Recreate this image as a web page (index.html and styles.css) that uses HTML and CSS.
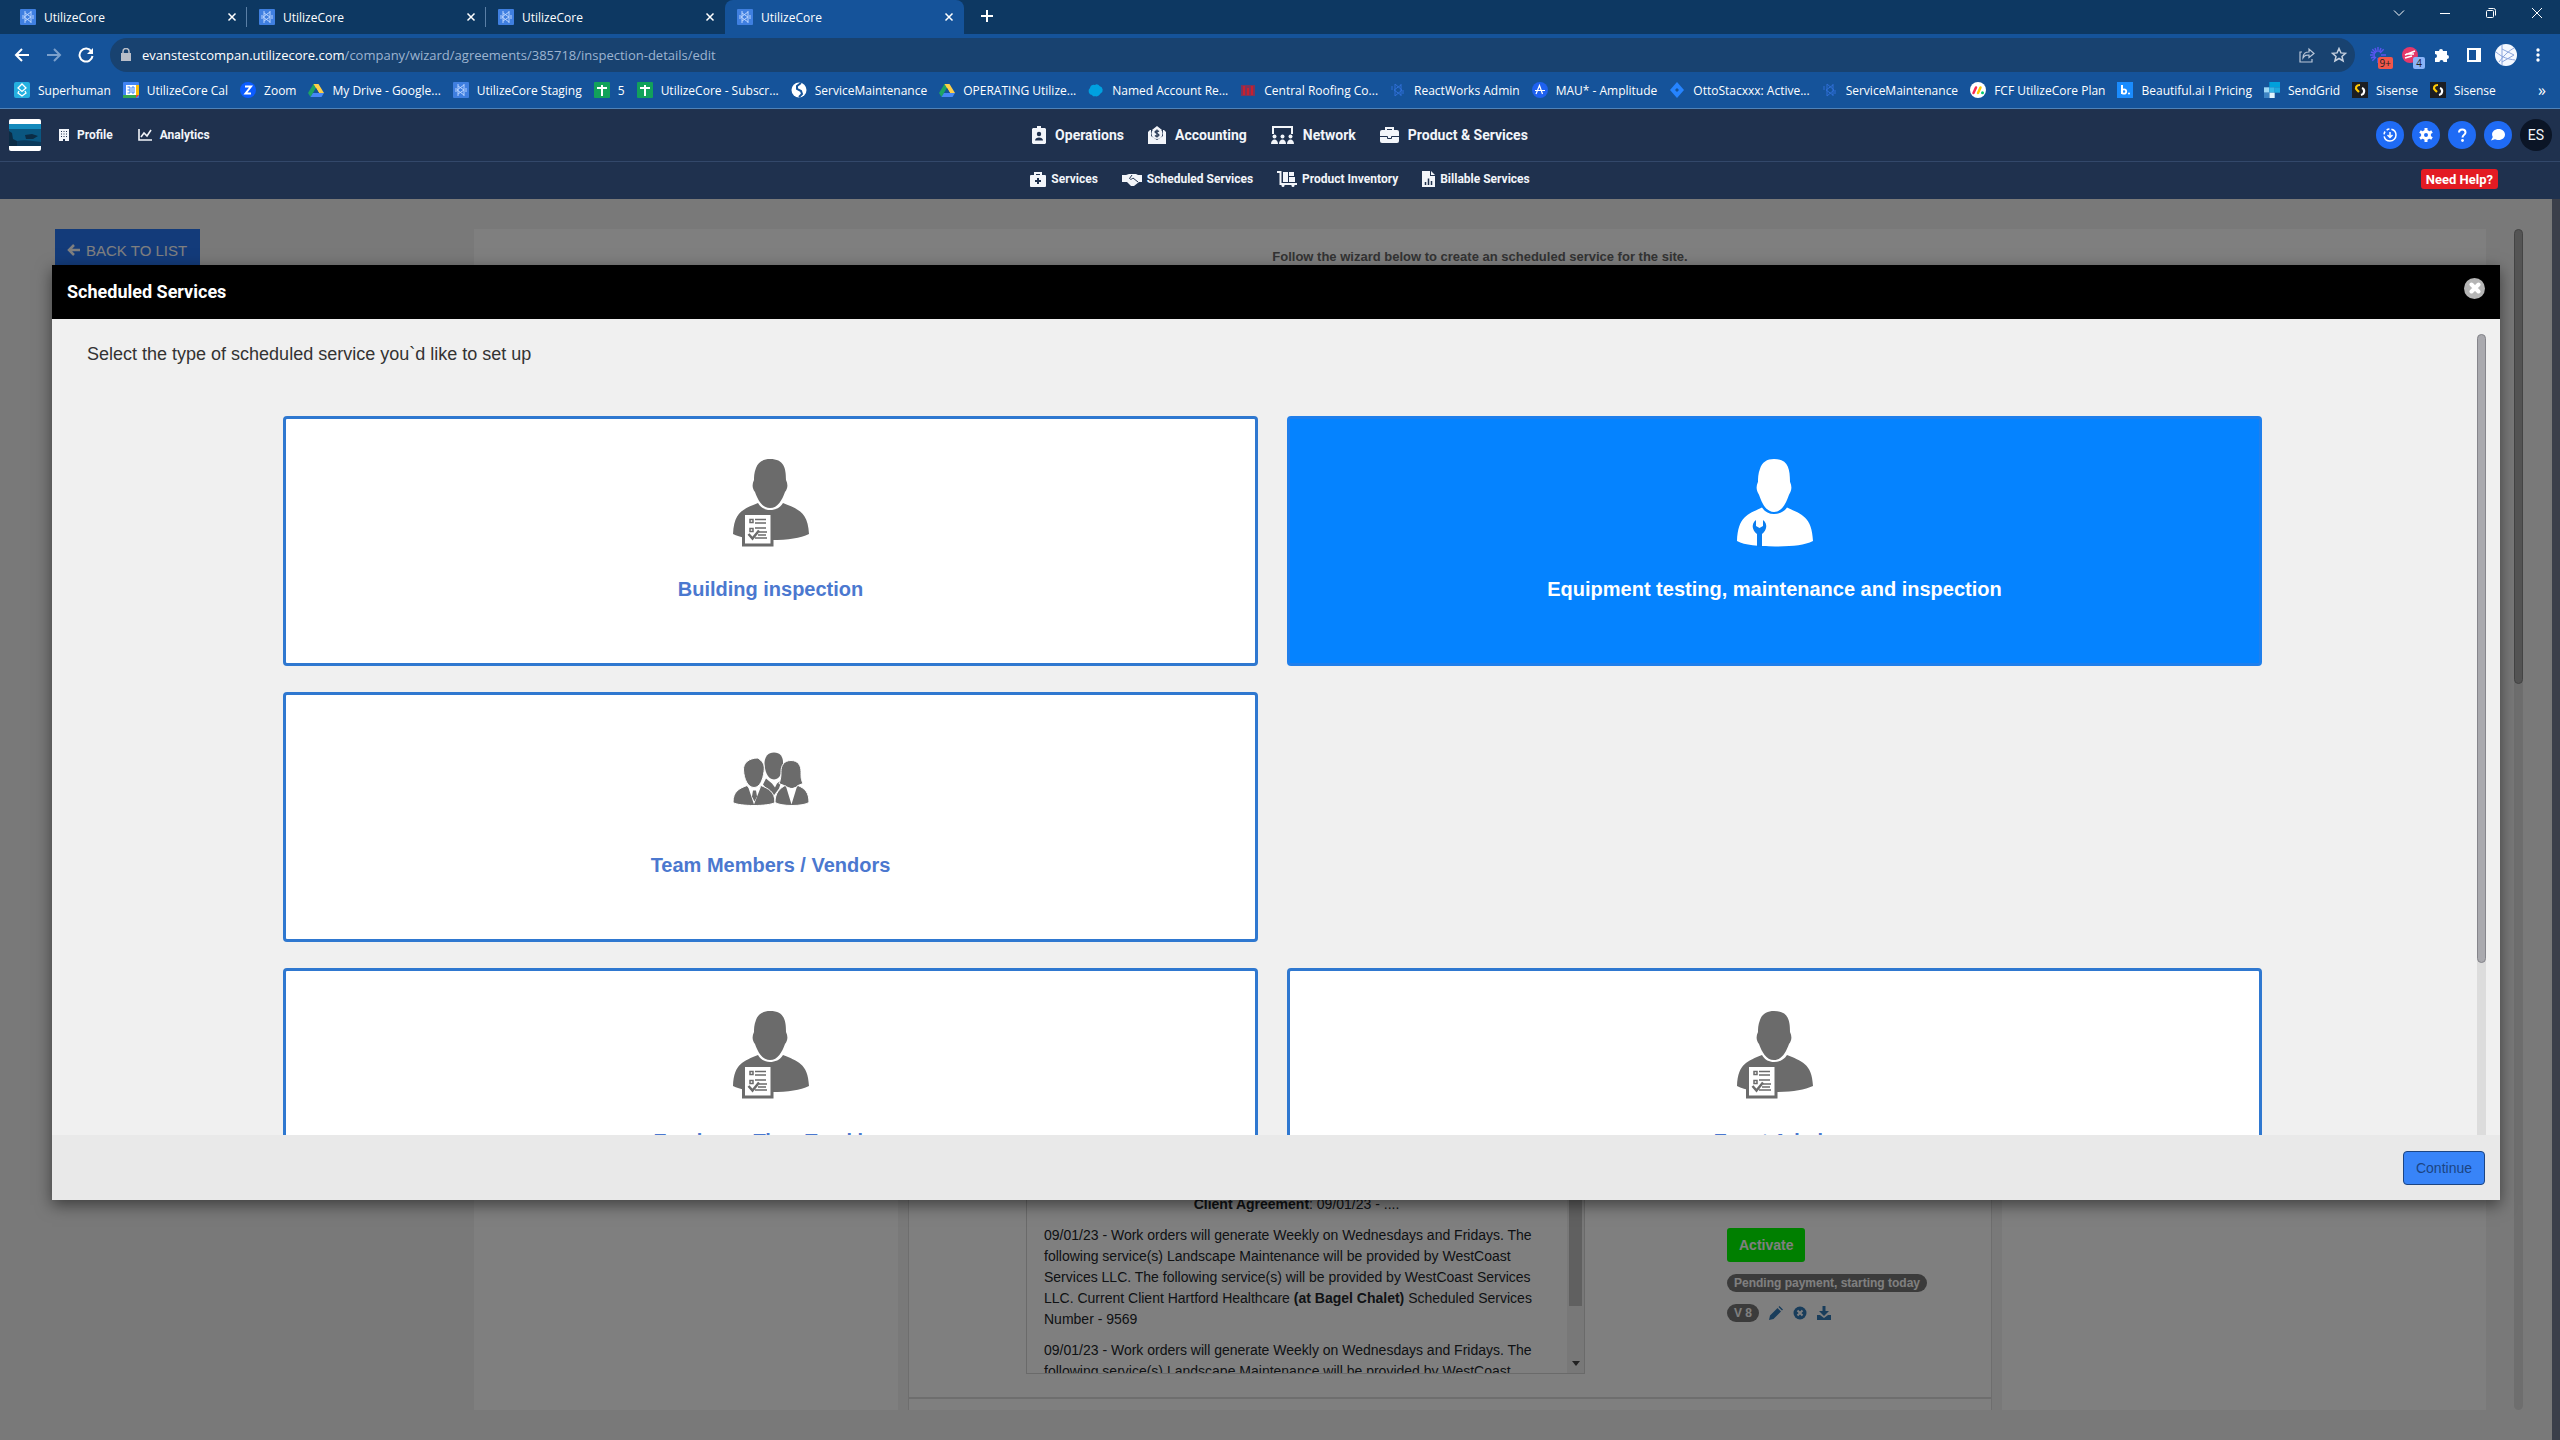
FILE: index.html
```html
<!DOCTYPE html>
<html lang="en">
<head>
    <meta charset="UTF-8">
    <meta name="viewport" content="width=device-width, initial-scale=1.0">
    <title>UtilizeCore</title>
    <link rel="stylesheet" href="styles.css">
</head>
<body>
    <!-- icons -->
    <svg class="sprite" aria-hidden="true">
        <symbol id="i-core" viewBox="0 0 16 16">
            <rect width="16" height="16" rx="1" fill="#3f7fe0"/>
            <path d="M5 2v12M5 4l6 4-6 4M11 2v12M11 3L4 8l7 5M3 6v4M13 6v4" fill="none" stroke="#b8d4ff"/>
        </symbol>
        <symbol id="i-core-dark" viewBox="0 0 16 16">
            <path d="M5 2v12M5 2l7 6-7 6M11 2v12M11 3L4 8l7 5M2 4v4M13 8v4" fill="none" stroke="#2f6fd6"/>
        </symbol>
        <symbol id="i-superhuman" viewBox="0 0 16 16">
            <rect width="16" height="16" rx="2" fill="#25b0e0"/>
            <path d="M8 2l4 4-4 3.500-4-3.500zM5 9l-1 2 4 3 4-3-1-2" fill="none" stroke="#fff" stroke-width="1.300"/>
        </symbol>
        <symbol id="i-cal" viewBox="0 0 16 16">
            <rect width="16" height="16" rx="1" fill="#4285f4"/>
            <path d="M13 3h3v10h-3z" fill="#fbbc04"/><path d="M0 13h13v3H0z" fill="#34a853"/><path d="M13 13h3l-3 3z" fill="#ea4335"/>
            <path d="M3 3h10v10H3z" fill="#fff"/>
            <path d="M4.500 5h2.500v6H4.500M4.500 8h2.500M9 5h2v6H9z" fill="none" stroke="#4285f4"/>
        </symbol>
        <symbol id="i-zoom" viewBox="0 0 16 16">
            <circle cx="8" cy="8" r="8" fill="#0b5cff"/>
            <path d="M5 4.500h6L5.500 11.500H11" fill="none" stroke="#fff" stroke-width="2"/>
        </symbol>
        <symbol id="i-drive" viewBox="0 0 16 16">
            <path d="M5.500 2h5L5 11.500 2.500 15 0 11z" fill="#1ea362"/>
            <path d="M5.500 2h5l5.500 9h-5z" fill="#ffcf48"/>
            <path d="M5 11h11l-2.500 4h-11z" fill="#4688f4"/>
            <path d="M8 6l3 5H5z" fill="#15539a"/>
        </symbol>
        <symbol id="i-sheet" viewBox="0 0 16 16">
            <rect width="16" height="16" rx="1" fill="#12a15a"/>
            <path d="M8 3v11M3 6h10" stroke="#fff" stroke-width="2"/>
        </symbol>
        <symbol id="i-globe" viewBox="0 0 16 16">
            <circle cx="8" cy="8" r="7.500" fill="#fff"/>
            <path d="M10 1L6 4v3l4 2 1 3-3 3" fill="none" stroke="#15539a" stroke-width="2"/>
        </symbol>
        <symbol id="i-cloud" viewBox="0 0 16 16">
            <path d="M4 13a4 4 0 0 1-2-7 3.500 3.500 0 0 1 5-3 3 3 0 0 1 4.500 1 4 4 0 0 1 1 7.500C11 14 8 15 7 14c-1 1-2.500 0-3-1z" fill="#00a1e0"/>
        </symbol>
        <symbol id="i-roof" viewBox="0 0 16 16">
            <path d="M1 3h14v11H1z" fill="#7d3358"/><path d="M4 4v9M8 6v7M12 4v9" stroke="#c8202f" stroke-width="2"/>
        </symbol>
        <symbol id="i-amp" viewBox="0 0 16 16">
            <circle cx="8" cy="8" r="8" fill="#1e61f0"/>
            <path d="M4 12L7.500 3.500 10.500 12M3 8.500h10" fill="none" stroke="#fff" stroke-width="1.200"/>
        </symbol>
        <symbol id="i-jira" viewBox="0 0 16 16">
            <path d="M8 0l7 8-7 8-7-8z" fill="#2684ff"/><path d="M8 6l2 2-2 2-2-2z" fill="#15539a"/>
        </symbol>
        <symbol id="i-monday" viewBox="0 0 16 16">
            <circle cx="8" cy="8" r="8" fill="#fff"/>
            <path d="M3.500 11l2.500-5.500" stroke="#f62b54" stroke-width="2.500" stroke-linecap="round"/>
            <path d="M8 11l2.500-5.500" stroke="#fc0" stroke-width="2.500" stroke-linecap="round"/>
            <circle cx="12.500" cy="10.800" r="1.500" fill="#00ca72"/>
        </symbol>
        <symbol id="i-beaut" viewBox="0 0 16 16">
            <rect width="16" height="16" fill="#1a8cff"/>
            <path d="M5 3v9" stroke="#fff" stroke-width="2"/><circle cx="7" cy="9.500" r="2.200" fill="none" stroke="#fff" stroke-width="1.800"/>
            <circle cx="12" cy="11.500" r="1" fill="#fff"/>
        </symbol>
        <symbol id="i-sendgrid" viewBox="0 0 16 16">
            <path d="M0 5.300h5.300v5.400H0z" fill="#9dd6f5"/><path d="M5.300 0h10.700v5.300H5.300z" fill="#00a0dc"/>
            <path d="M5.300 5.300h5.400v5.400H5.300z" fill="#37b6e8"/><path d="M5.300 10.700h5.400V16H5.300z" fill="#e2f4fd"/>
            <path d="M10.700 5.300H16v5.400h-5.300z" fill="#1da8e0"/><path d="M0 10.700h5.300V16H0z" fill="#3d84c4"/>
        </symbol>
        <symbol id="i-sisense" viewBox="0 0 16 16">
            <rect width="16" height="16" fill="#1c1e22"/>
            <path d="M8 3C4 3 3 6 5 8l2 2" fill="none" stroke="#ffcb05" stroke-width="2.200"/>
            <path d="M10 6c3 1 3 6-1 7" fill="none" stroke="#fff" stroke-width="2.200"/>
        </symbol>
        <symbol id="i-x" viewBox="0 0 10 10"><path d="M1.500 1.500l7 7M8.500 1.500l-7 7" fill="none" stroke="currentColor" stroke-width="1.500"/></symbol>

        <!-- card pictures -->
        <symbol id="i-person" viewBox="0 0 76 88">
            <path d="M37 0C30 0 25 3 23 9c-2 5-2 9-2 12-2 4-2 8 1 12 3 8 7 16 15 16s12-8 15-16c3-4 3-8 1-12C53 9 51 0 37 0z" fill="currentColor"/>
            <path d="M25 44c3 5 7 7 12 7s10-2 13-7c14 6 25 8 26 31-9 4-20 6-38 6-17 0-30-2-38-6 1-23 11-25 25-31z" fill="currentColor"/>
        </symbol>
        <symbol id="i-inspector" viewBox="0 0 76 88">
            <use href="#i-person"/>
            <path d="M10.500 54.500h28.500v31.500H10.500z" fill="#fff" stroke="currentColor" stroke-width="3"/>
            <path d="M17 60.500h3v3h-3zM17 69.500h3v3h-3z" fill="none" stroke="currentColor" stroke-width="1.500"/>
            <path d="M22 60.500h11M22 64h11M22 69h11M26 73h8M25 76h8M22 79h12" stroke="currentColor" stroke-width="1.500"/>
            <path d="M15.500 75l4 4.500 6.500-8" fill="none" stroke="currentColor" stroke-width="2.500"/>
        </symbol>
        <symbol id="i-mechanic" viewBox="0 0 76 88">
            <g transform="scale(1 1.080)">
                <path d="M37 0C30 0 25 3 23 9c-2 5-2 9-2 12-2 4-2 8 1 12 3 8 7 16 15 16s12-8 15-16c3-4 3-8 1-12C53 9 51 0 37 0z" fill="currentColor"/>
                <path d="M25 45c3 4 7 6 12 6s10-2 13-6c14 6 25 8 26 31-9 4-20 5-38 5-17 0-30-1-38-5 1-23 11-25 25-31z" fill="currentColor"/>
            </g>
            <path d="M19 61c-5 4-4 10 1 14v13h5V75c5-4 6-10 1-14v6l-3.500 2-3.500-2z" fill="#0a7df0"/>
        </symbol>
        <symbol id="i-team" viewBox="0 0 76 53">
            <g fill="currentColor">
                <path d="M41 0c-6 0-9 4-9.500 10 0 8 3 17 9.500 17s9-9 9-17c0-6-3-10-9-10z"/>
                <path d="M33 26l6 5 3 4 2-4 5-4-3 9-6 8-10-12z"/>
            </g>
            <g fill="currentColor" stroke="#fff">
                <path d="M25 5.500c-9 0-15 5-14.500 12C11 27 15 35 21 35s9-8 10-16c1-6-1-9-3-11z"/>
                <path d="M58 8c-7 0-10 5-10 11 0 7-1 10-2 12l5 2c2 3 5 4 8 4s5-2 6-4l5-2c-2-4-2-6-2-12 0-6-3-11-10-11z"/>
                <path d="M14 33c2 3 5 5 7 5s5-2 7-5c7 3 14 6 14 17-6 4-36 4-42 0 0-11 6-14 14-17z"/>
                <path d="M52 33c2 2 5 3 7 3s4-1 6-3c7 3 11 7 11 17-6 4-28 4-34 0 0-10 5-14 10-17z"/>
            </g>
            <path d="M15 34l6 18 7-18-7 4zM53 34l5.500 18L64 34l-5.500 2z" fill="#fff"/>
            <path d="M20 38h3l1 6-2.500 5L19 44z" fill="currentColor"/>
        </symbol>
    </svg>

    <!-- browser -->
    <header class="browser">
        <div class="tabs">
            <div class="tab"><svg class="fav"><use href="#i-core"/></svg><span>UtilizeCore</span><button type="button" aria-label="Close tab"><svg><use href="#i-x"/></svg></button></div>
            <div class="tab"><svg class="fav"><use href="#i-core"/></svg><span>UtilizeCore</span><button type="button" aria-label="Close tab"><svg><use href="#i-x"/></svg></button></div>
            <div class="tab"><svg class="fav"><use href="#i-core"/></svg><span>UtilizeCore</span><button type="button" aria-label="Close tab"><svg><use href="#i-x"/></svg></button></div>
            <div class="tab active"><svg class="fav"><use href="#i-core"/></svg><span>UtilizeCore</span><button type="button" aria-label="Close tab"><svg><use href="#i-x"/></svg></button></div>
            <button class="new-tab" type="button" aria-label="New tab"><svg viewBox="0 0 12 12"><path d="M6 0v12M0 6h12" stroke="#fff" stroke-width="2"/></svg></button>
            <div class="window-btns">
                <button type="button" aria-label="Search tabs"><svg viewBox="0 0 12 12"><path d="M1 3.500l5 5 5-5" fill="none" stroke="#fff"/></svg></button>
                <button type="button" aria-label="Minimize"><svg viewBox="0 0 12 12"><path d="M1 6.500h10" stroke="#fff"/></svg></button>
                <button type="button" aria-label="Restore"><svg viewBox="0 0 12 12"><rect x="1.500" y="3.500" width="7" height="7" rx="1" fill="none" stroke="#fff"/><path d="M3.500 1.500h5a2 2 0 0 1 2 2v5" fill="none" stroke="#fff"/></svg></button>
                <button type="button" aria-label="Close"><svg viewBox="0 0 12 12"><path d="M1 1l10 10M11 1L1 11" stroke="#fff"/></svg></button>
            </div>
        </div>
        <div class="toolbar">
            <button type="button" aria-label="Back"><svg viewBox="0 0 16 16"><path d="M15 8H2M8 2L2 8l6 6" fill="none" stroke="#fff" stroke-width="2"/></svg></button>
            <button type="button" aria-label="Forward"><svg viewBox="0 0 16 16"><path d="M1 8h13M8 2l6 6-6 6" fill="none" stroke="#7ba0cc" stroke-width="2"/></svg></button>
            <button type="button" aria-label="Reload"><svg viewBox="0 0 16 16"><path d="M13.500 4.500A6.500 6.500 0 1 0 14.500 9" fill="none" stroke="#fff" stroke-width="2"/><path d="M15 1v6H9z" fill="#fff"/></svg></button>
            <div class="omnibox">
                <svg class="lock" viewBox="0 0 10 14"><path d="M0 5h10v8H0z" fill="#b9bec8"/><path d="M2 5.500V3.500a3 3 0 0 1 6 0v2" fill="none" stroke="#b9bec8" stroke-width="1.500"/></svg>
                <div class="url">evanstestcompan.utilizecore.com<span>/company/wizard/agreements/385718/inspection-details/edit</span></div>
                <button type="button" aria-label="Share"><svg viewBox="0 0 16 16"><path d="M3 5H1v10h12v-3M4 11c0-5 3-6 6-6V2l5 4.500-5 4V8c-3 0-4 0-6 3z" fill="none" stroke="#b9c6d8" stroke-width="1.200"/></svg></button>
                <button type="button" aria-label="Bookmark"><svg viewBox="0 0 16 16"><path d="M8 1.500l1.900 4.400 4.600.400-3.500 3.100 1.100 4.600L8 11.500 3.900 14 5 9.400 1.500 6.300l4.600-.400z" fill="none" stroke="#c5d0df" stroke-width="1.500"/></svg></button>
            </div>
            <button type="button" class="ext" aria-label="Loom"><svg viewBox="0 0 16 16"><path d="M8 0v5M8 11v5M0 8h5M11 8h5M2.300 2.300L6 6M10 10l3.700 3.700M13.700 2.300L10 6M6 10l-3.700 3.700M5 1l1.500 4M11 1L9.500 5M1 5l4 1.500M1 11l4-1.500" stroke="#5a55f0" stroke-width="1.400"/></svg><span class="badge">9+</span></button>
            <button type="button" class="ext" aria-label="Extension"><svg viewBox="0 0 16 16"><circle cx="8" cy="8" r="8" fill="#e5386a"/><path d="M3 8l10-4M4 7h8M3 11l7-2" stroke="#fff" stroke-width="1.500"/></svg><span class="badge blue">4</span></button>
            <button type="button" aria-label="Extensions"><svg viewBox="0 0 16 16"><path d="M1 4h4a2 2 0 1 1 4 0h4v4a2 2 0 1 1 0 4v3H9.500a2 2 0 0 0-4 0H1v-4a2 2 0 0 0 0-4z" fill="#fff"/></svg></button>
            <button type="button" aria-label="Side panel"><svg viewBox="0 0 16 16"><path d="M2 2h12v12H2z" fill="none" stroke="#fff" stroke-width="2"/><path d="M10 2h4v12h-4z" fill="#fff"/></svg></button>
            <button type="button" class="avatar" aria-label="Profile"><svg viewBox="0 0 22 22"><circle cx="11" cy="11" r="11" fill="#f4f8ff"/><path d="M7 1v20M7 5l12 6-12 7M1 8c7 6 12 7 19 8M4 18C10 10 14 7 19 4" fill="none" stroke="#8aa4dc"/></svg></button>
            <button type="button" aria-label="Menu"><svg viewBox="0 0 16 16"><circle cx="8" cy="3" r="1.700" fill="#fff"/><circle cx="8" cy="8" r="1.700" fill="#fff"/><circle cx="8" cy="13" r="1.700" fill="#fff"/></svg></button>
        </div>
        <nav class="bookmarks">
            <a href="#"><svg class="fav"><use href="#i-superhuman"/></svg>Superhuman</a>
            <a href="#"><svg class="fav"><use href="#i-cal"/></svg>UtilizeCore Cal</a>
            <a href="#"><svg class="fav"><use href="#i-zoom"/></svg>Zoom</a>
            <a href="#"><svg class="fav"><use href="#i-drive"/></svg>My Drive - Google...</a>
            <a href="#"><svg class="fav"><use href="#i-core"/></svg>UtilizeCore Staging</a>
            <a href="#"><svg class="fav"><use href="#i-sheet"/></svg>5</a>
            <a href="#"><svg class="fav"><use href="#i-sheet"/></svg>UtilizeCore - Subscr...</a>
            <a href="#"><svg class="fav"><use href="#i-globe"/></svg>ServiceMaintenance</a>
            <a href="#"><svg class="fav"><use href="#i-drive"/></svg>OPERATING Utilize...</a>
            <a href="#"><svg class="fav"><use href="#i-cloud"/></svg>Named Account Re...</a>
            <a href="#"><svg class="fav"><use href="#i-roof"/></svg>Central Roofing Co...</a>
            <a href="#"><svg class="fav"><use href="#i-core-dark"/></svg>ReactWorks Admin</a>
            <a href="#"><svg class="fav"><use href="#i-amp"/></svg>MAU* - Amplitude</a>
            <a href="#"><svg class="fav"><use href="#i-jira"/></svg>OttoStacxxx: Active...</a>
            <a href="#"><svg class="fav"><use href="#i-core-dark"/></svg>ServiceMaintenance</a>
            <a href="#"><svg class="fav"><use href="#i-monday"/></svg>FCF UtilizeCore Plan</a>
            <a href="#"><svg class="fav"><use href="#i-beaut"/></svg>Beautiful.ai I Pricing</a>
            <a href="#"><svg class="fav"><use href="#i-sendgrid"/></svg>SendGrid</a>
            <a href="#"><svg class="fav"><use href="#i-sisense"/></svg>Sisense</a>
            <a href="#"><svg class="fav"><use href="#i-sisense"/></svg>Sisense</a>
            <button type="button">»</button>
        </nav>
    </header>

    <!-- app menu -->
    <div class="menu">
        <div class="menu-top">
            <div class="menu-left">
                <svg class="logo" viewBox="0 0 32 32"><rect width="32" height="32" rx="2" fill="#fff"/><path d="M0 5h32v22H0z" fill="#0a5680"/><path d="M0 5h32v5H0z" fill="#1489bb"/><path d="M0 12l3 2 1 6 4 2 2 5H0zM16 16l7-1 6 2-5 3h-7z" fill="#0b2c45"/><path d="M8 22c8-2 16 0 24 1v4H8z" fill="#0a3a5c"/></svg>
                <a href="#"><svg viewBox="0 0 10 12" width="10" height="12"><path d="M0 0h10v12H6v-2H4v2H0z" fill="#f2f5fa"/><path d="M2 2.500h6M2 5h6M2 7.500h6" stroke="#1f314e" stroke-dasharray="1 1.500"/></svg>Profile</a>
                <a href="#"><svg viewBox="0 0 14 12" width="14" height="12"><path d="M1 0v11h13M3 8l3-4 3 3 4-6" fill="none" stroke="#f2f5fa" stroke-width="1.600"/></svg>Analytics</a>
            </div>
            <nav class="menu-center">
                <a href="#"><svg viewBox="0 0 14 18" width="14" height="18"><path d="M1 2h4V0h4v2h4l1 1v14l-1 1H1l-1-1V3z" fill="#f2f5fa"/><circle cx="7" cy="8" r="2.200" fill="#1f314e"/><path d="M3 14.500c0-4 8-4 8 0z" fill="#1f314e"/></svg>Operations</a>
                <a href="#"><svg viewBox="0 0 18 18" width="18" height="18"><path d="M0 6l2-2h2l5-4 5 4h2l2 2v12H0z" fill="#f2f5fa"/><path d="M3 4h12v6l-6 4-6-4z" fill="#1f314e"/><circle cx="9" cy="7.500" r="5.500" fill="#f2f5fa"/><path d="M11 5.500c-1-1-4-1-4 .500s4 1.500 4 3-3 1.500-4 .500M9 3.500v8" fill="none" stroke="#1f314e" stroke-width="1.200"/></svg>Accounting</a>
                <a href="#"><svg viewBox="0 0 23 18" width="23" height="18"><path d="M2 8V1h19v7" fill="none" stroke="#f2f5fa" stroke-width="2"/><circle cx="3.500" cy="10.500" r="2" fill="#f2f5fa"/><circle cx="11.500" cy="10.500" r="2" fill="#f2f5fa"/><circle cx="19.500" cy="10.500" r="2" fill="#f2f5fa"/><path d="M0 18c0-6 7-6 7 0zM8 18c0-6 7-6 7 0zM16 18c0-6 7-6 7 0z" fill="#f2f5fa"/></svg>Network</a>
                <a href="#"><svg viewBox="0 0 19 16" width="19" height="16"><path d="M6 4V1h7v3" fill="none" stroke="#f2f5fa" stroke-width="2"/><rect y="3" width="19" height="13" rx="2" fill="#f2f5fa"/><path d="M0 9.500h7.500v2h4v-2H19" fill="none" stroke="#1f314e"/></svg>Product &amp; Services</a>
            </nav>
            <div class="menu-right">
                <button type="button" aria-label="Downloads"><svg viewBox="0 0 14 14"><circle cx="7" cy="7" r="6" fill="none" stroke="#fff" stroke-width="1.500" stroke-dasharray="17 2 3 2 3 2"/><path d="M7 4v5M4.500 7L7 9.500 9.500 7" fill="none" stroke="#fff" stroke-width="1.500"/></svg></button>
                <button type="button" aria-label="Settings"><svg viewBox="0 0 14 14"><circle cx="7" cy="7" r="3.500" fill="none" stroke="#fff" stroke-width="3"/><path d="M7 0v3M7 11v3M1 3.500L3.500 5M10.500 9l2.500 1.500M13 3.500L10.500 5M3.500 9L1 10.500" stroke="#fff" stroke-width="3"/></svg></button>
                <button type="button" aria-label="Help"><svg viewBox="0 0 14 14"><path d="M4 4.500C4 .500 10.500.500 10.500 4.500 10.500 7 7.500 6.500 7.500 9.500" fill="none" stroke="#fff" stroke-width="2"/><circle cx="7.500" cy="12.500" r="1.400" fill="#fff"/></svg></button>
                <button type="button" aria-label="Chat"><svg viewBox="0 0 14 14"><path d="M7.500 1C11.500 1 14 3.500 14 6.500S11.500 12 7.500 12c-1.500 0-2.500-.300-3.500-.800L0 12.500 1.800 9C-.500 5 3 1 7.500 1z" fill="#fff"/></svg></button>
                <span class="user">ES</span>
            </div>
        </div>
        <div class="menu-sub">
            <nav class="menu-center">
                <a href="#"><svg viewBox="0 0 16 15" width="16" height="15"><path d="M5 4V1h6v3" fill="none" stroke="#f2f5fa" stroke-width="2"/><rect y="3" width="16" height="12" rx="1" fill="#f2f5fa"/><path d="M8 6v6M5 9h6" stroke="#1f314e" stroke-width="2"/></svg>Services</a>
                <a href="#"><svg viewBox="0 0 20 13" width="20" height="13"><path d="M0 2h4l3-1h7l2 1h4v7h-3l-5 4h-3L5 9H0z" fill="#f2f5fa"/><path d="M10 2L7.500 5.500c1 1.500 2.500.500 3.500-.500l5 4" fill="none" stroke="#1f314e"/></svg>Scheduled Services</a>
                <a href="#"><svg viewBox="0 0 20 16" width="20" height="16"><path d="M0 1h3.500v12H20" fill="none" stroke="#f2f5fa" stroke-width="2"/><path d="M6 1h5v10H6zM12 1h5v4h-5zM12 6h6v5h-6z" fill="#f2f5fa"/><circle cx="6" cy="14.500" r="1.500" fill="#f2f5fa"/><circle cx="16" cy="14.500" r="1.500" fill="#f2f5fa"/></svg>Product Inventory</a>
                <a href="#"><svg viewBox="0 0 13 16" width="13" height="16"><path d="M0 0h8v5h5v11H0zM9 0l4 4H9z" fill="#f2f5fa"/><path d="M3.500 14v-3M6.500 14V7.500M9.500 14V10" stroke="#1f314e" stroke-width="1.500"/></svg>Billable Services</a>
            </nav>
            <button class="need-help" type="button">Need Help?</button>
        </div>
    </div>

    <!-- page -->
    <main class="page">
        <div class="wizard">
            <div class="side">
                <a class="back" href="#"><svg viewBox="0 0 13 12" width="13" height="12"><path d="M13 6H2M7 1L2 6l5 5" fill="none" stroke="#fff" stroke-width="2.500"/></svg>BACK TO LIST</a>
            </div>
            <section class="panel">
                <p class="intro">Follow the wizard below to create an scheduled service for the site.</p>
                <div class="columns">
                    <div class="col"></div>
                    <div class="col middle">
                        <div class="agreement">
                            <div class="terms">
                                <div class="terms-text">
                                    <p class="center"><b>Client Agreement</b>: 09/01/23 - ....</p>
                                    <p>09/01/23 - Work orders will generate Weekly on Wednesdays and Fridays. The following service(s) Landscape Maintenance will be provided by WestCoast Services LLC. The following service(s) will be provided by WestCoast Services LLC. Current Client Hartford Healthcare <b>(at Bagel Chalet)</b> Scheduled Services Number - 9569</p>
                                    <p>09/01/23 - Work orders will generate Weekly on Wednesdays and Fridays. The following service(s) Landscape Maintenance will be provided by WestCoast</p>
                                </div>
                                <div class="terms-bar"><div class="thumb"></div><svg viewBox="0 0 8 6" width="8" height="6"><path d="M0 0h8L4 5z" fill="#444"/></svg></div>
                            </div>
                            <div class="actions">
                                <button class="activate" type="button">Activate</button>
                                <span class="pill">Pending payment, starting today</span>
                                <div class="version">
                                    <span class="pill">V 8</span>
                                    <a href="#" aria-label="Edit"><svg viewBox="0 0 14 14"><path d="M0 14l1-4.500L8.500 2 12 5.500 4.500 13zM9.500 1l1-1L14 3.500l-1 1z"/></svg></a>
                                    <a href="#" aria-label="Cancel"><svg viewBox="0 0 14 14"><circle cx="7" cy="7" r="6.500"/><path d="M4.500 4.500l5 5M9.500 4.500l-5 5" stroke="#fff" stroke-width="2"/></svg></a>
                                    <a href="#" aria-label="Download"><svg viewBox="0 0 14 14"><path d="M5.500 0h3v5H12l-5 5-5-5h3.500zM0 9h3l4 3 4-3h3v5H0z"/></svg></a>
                                </div>
                            </div>
                        </div>
                        <hr>
                    </div>
                    <div class="col"></div>
                </div>
            </section>
            <div class="page-bar"><div class="thumb"></div></div>
        </div>
        <div class="window-bar"></div>
        <div class="backdrop"></div>

        <div class="modal" role="dialog" aria-labelledby="modal-title">
            <div class="modal-header">
                <h1 id="modal-title">Scheduled Services</h1>
                <button class="close" type="button" aria-label="Close"><svg viewBox="0 0 12 12"><path d="M2.500 2.500l7 7M9.500 2.500l-7 7" stroke="#fff" stroke-width="4" stroke-linecap="round"/></svg></button>
            </div>
            <div class="modal-body">
                <div class="choices">
                    <p>Select the type of scheduled service you`d like to set up</p>
                    <div class="cards">
                        <button class="card" type="button"><svg class="pic"><use href="#i-inspector"/></svg><span>Building inspection</span></button>
                        <button class="card selected" type="button"><svg class="pic"><use href="#i-mechanic"/></svg><span>Equipment testing, maintenance and inspection</span></button>
                        <button class="card first" type="button"><svg class="pic"><use href="#i-team"/></svg><span>Team Members / Vendors</span></button>
                        <button class="card first" type="button"><svg class="pic"><use href="#i-inspector"/></svg><span>Employee Time Tracking</span></button>
                        <button class="card" type="button"><svg class="pic"><use href="#i-inspector"/></svg><span>Event Admin</span></button>
                    </div>
                </div>
                <div class="modal-bar"><div class="thumb"></div></div>
            </div>
            <div class="modal-footer">
                <button class="continue" type="button">Continue</button>
            </div>
        </div>
    </main>
</body>
</html>
```

FILE: styles.css
```css
*{
    margin: 0;
    padding: 0;
    box-sizing: border-box;
}
body{
    height: 100vh;
    display: flex;
    flex-direction: column;
    overflow: hidden;
    font-family: "Liberation Sans", Arial, sans-serif;
    font-size: 14px;
}
a{
    color: inherit;
    text-decoration: none;
}
button{
    border: 0;
    background: none;
    font: inherit;
    color: inherit;
    cursor: pointer;
}
.sprite{
    position: absolute;
    width: 0;
    height: 0;
}
/* browser */
.browser{
    color: #fff;
    background: #15539a;
    font-family: "Open Sans", sans-serif;
    font-size: 12px;
    border-bottom: 1px solid #4f82b8;
}
.fav{
    width: 16px;
    height: 16px;
    flex: none;
}
.tabs{
    display: flex;
    height: 34px;
    padding-left: 8px;
    background: #0d3862;
}
.tab{
    display: flex;
    align-items: center;
    gap: 8px;
    width: 239px;
    padding: 0 10px 0 12px;
    background: linear-gradient(#5a7fa6, #5a7fa6) no-repeat right center / 1px 20px;
}
.tab:nth-child(3){
    background: none;
}
.tab.active{
    background: #15539a;
    border-radius: 8px 8px 0 0;
}
.tab span{
    flex: 1;
}
.tab svg:not(.fav){
    width: 10px;
    height: 10px;
    display: block;
}
.new-tab{
    width: 46px;
}
.new-tab svg,.window-btns svg{
    width: 12px;
    height: 12px;
}
.window-btns{
    display: flex;
    margin-left: auto;
    height: 28px;
}
.window-btns button{
    width: 46px;
}
.toolbar{
    display: flex;
    align-items: center;
    height: 38px;
    padding: 4px 6px 0;
}
.toolbar button{
    width: 32px;
    height: 32px;
    display: flex;
    align-items: center;
    justify-content: center;
}
.toolbar button svg{
    width: 16px;
    height: 16px;
}
.toolbar .avatar svg{
    width: 22px;
    height: 22px;
}
.omnibox{
    flex: 1;
    display: flex;
    align-items: center;
    height: 34px;
    margin: 0 7px 0 8px;
    padding-left: 11px;
    border-radius: 17px;
    background: #184270;
}
.lock{
    width: 10px;
    height: 14px;
    margin-right: 11px;
}
.url{
    flex: 1;
    font-size: 13px;
}
.url span{
    color: #9db4d0;
}
.ext{
    position: relative;
}
.badge{
    position: absolute;
    right: 1px;
    bottom: 2px;
    height: 12px;
    padding: 0 2px;
    border-radius: 2px;
    background: #f0564a;
    color: #222;
    font-size: 10px;
    line-height: 12px;
}
.badge.blue{
    padding: 0 3px;
    background: #8ab4f8;
}
.bookmarks{
    display: flex;
    align-items: center;
    gap: 12px;
    height: 36px;
    padding: 0 14px;
    white-space: nowrap;
}
.bookmarks a{
    display: flex;
    align-items: center;
    gap: 8px;
}
.bookmarks button{
    margin-left: auto;
    font-size: 16px;
}
/* app menu */
.menu{
    background: #1f314e;
    color: #f2f5fa;
    font-family: Roboto, sans-serif;
    font-weight: bold;
    font-size: 12px;
}
.menu-top,.menu-sub{
    display: grid;
    grid-template-columns: 1fr auto 1fr;
    align-items: center;
}
.menu-top{
    height: 53px;
    border-bottom: 1px solid #33486a;
}
.menu-sub{
    height: 37px;
    padding-bottom: 3px;
}
.menu a{
    display: flex;
    align-items: center;
    gap: 5px;
}
.menu-left{
    display: flex;
    align-items: center;
    padding-left: 9px;
}
.menu-left .logo{
    width: 32px;
    height: 32px;
}
.menu-left a{
    gap: 8px;
    margin-left: 18px;
}
.menu-left a + a{
    margin-left: 25px;
}
.menu-center{
    display: flex;
    gap: 24px;
    grid-column: 2;
}
.menu-top .menu-center{
    font-size: 14px;
}
.menu-top .menu-center a{
    gap: 9px;
}
.menu-right{
    display: flex;
    align-items: center;
    justify-content: flex-end;
    gap: 8px;
    padding-right: 8px;
}
.menu-right button{
    display: flex;
    align-items: center;
    justify-content: center;
    width: 28px;
    height: 28px;
    border-radius: 50%;
    background: #1f6bf5;
}
.menu-right svg{
    width: 14px;
    height: 14px;
}
.user{
    width: 32px;
    height: 32px;
    border-radius: 50%;
    background: #0b1526;
    font-size: 14px;
    font-weight: normal;
    line-height: 32px;
    text-align: center;
}
.need-help{
    justify-self: end;
    height: 20px;
    margin-right: 62px;
    padding: 0 5px;
    border-radius: 3px;
    background: #e31b23;
    color: #fff;
    font-size: 13px;
}
/* page */
.page{
    position: relative;
    flex: 1;
    display: flex;
    min-height: 0;
    background: #f3f3f3;
}
.wizard{
    flex: 1;
    display: flex;
    padding: 30px 29px 30px 55px;
}
.side{
    width: 419px;
}
.back{
    display: inline-flex;
    align-items: center;
    gap: 6px;
    height: 42px;
    padding: 0 13px 0 12px;
    background: #2676f5;
    color: #fff;
    font-size: 15px;
}
.panel{
    flex: 1;
    display: flex;
    flex-direction: column;
    background: #fff;
}
.intro{
    padding-top: 18px;
    color: #666;
    font-size: 13px;
    font-weight: bold;
    line-height: 20px;
    text-align: center;
}
.columns{
    flex: 1;
    display: grid;
    grid-template-columns: 424px 1fr 484px;
    gap: 10px;
    margin-top: 42px;
    background: #f3f3f3;
}
.col{
    background: #fff;
}
.middle{
    display: flex;
    flex-direction: column;
    justify-content: flex-end;
    padding-bottom: 11px;
    border: solid #ddd;
    border-width: 0 1px;
}
.agreement{
    display: flex;
    gap: 142px;
    padding: 0 0 23px 117px;
}
.agreement + hr{
    border: 0;
    border-top: 2px solid #ddd;
}
.terms{
    display: flex;
    width: 559px;
    height: 200px;
    border: 1px solid #d5d5d5;
    overflow: hidden;
}
.terms-text{
    flex: 1;
    padding: 19px 18px 0 17px;
    color: #212529;
    line-height: 21px;
}
.terms-text p{
    margin-bottom: 10px;
}
.center{
    text-align: center;
}
.terms-bar{
    display: flex;
    flex-direction: column;
    align-items: center;
    justify-content: space-between;
    width: 17px;
    padding-bottom: 6px;
    background: #f1f1f1;
}
.terms-bar .thumb{
    width: 13px;
    height: 131px;
    background: #c1c1c1;
}
.actions{
    display: flex;
    flex-direction: column;
    align-items: flex-start;
    gap: 12px;
    padding-top: 54px;
}
.activate{
    height: 34px;
    padding: 0 12px;
    border-radius: 3px;
    background: #0f0;
    color: #fff;
    font-weight: bold;
}
.pill{
    padding: 0 7px;
    border-radius: 9px;
    background: #777;
    color: #fff;
    font-size: 12px;
    font-weight: bold;
    line-height: 18px;
}
.version{
    display: flex;
    align-items: center;
    gap: 10px;
}
.version svg{
    display: block;
    width: 14px;
    height: 14px;
    fill: #337ab7;
}
.page-bar{
    width: 9px;
    margin-left: 28px;
    background: #dcdcdc;
    border-radius: 5px;
}
.page-bar .thumb{
    height: 455px;
    border: 1px solid #888;
    border-radius: 5px;
    background: #a8a8a8;
}
.window-bar{
    width: 8px;
    background: #767e94;
}
.backdrop{
    position: absolute;
    inset: 0;
    background: rgba(0,0,0,0.5);
}
/* modal */
.modal{
    position: absolute;
    top: 66px;
    left: 52px;
    right: 60px;
    bottom: 240px;
    display: flex;
    flex-direction: column;
    background: #f0f0f0;
    box-shadow: 0 5px 15px rgba(0,0,0,0.5);
}
.modal-header{
    display: flex;
    align-items: center;
    justify-content: space-between;
    height: 54px;
    padding: 0 15px;
    background: #000;
    color: #fff;
}
.modal-header h1{
    font: bold 18px/24px Roboto, sans-serif;
}
.close{
    display: flex;
    align-items: center;
    justify-content: center;
    width: 21px;
    height: 21px;
    margin-bottom: 8px;
    border-radius: 50%;
    background: #b5b5b5;
}
.close svg{
    width: 12px;
    height: 12px;
}
.modal-body{
    flex: 1;
    display: flex;
    min-height: 0;
    padding-right: 14px;
    overflow: hidden;
}
.choices{
    flex: 1;
    padding-top: 23px;
}
.choices p{
    padding-left: 35px;
    color: #333;
    font-size: 18px;
    line-height: 24px;
}
.cards{
    display: grid;
    grid-template-columns: 1fr 1fr;
    grid-auto-rows: 250px;
    gap: 26px 29px;
    padding: 50px 215px 0 231px;
}
.card{
    display: flex;
    flex-direction: column;
    align-items: center;
    gap: 30px;
    padding-top: 40px;
    border: 3px solid #2f78d0;
    border-radius: 4px;
    background: #fff;
    color: #4b78cf;
    font-size: 20px;
    font-weight: bold;
    line-height: 24px;
}
.card.first{
    grid-column: 1;
}
.pic{
    width: 76px;
    height: 88px;
    color: #6b6b6b;
}
.card.selected{
    border-color: #1f7fec;
    background: #0583ff;
    color: #fff;
}
.selected .pic{
    color: #fff;
}
.modal-bar{
    width: 9px;
    margin-top: 15px;
    background: #dcdcdc;
    border-radius: 5px 5px 0 0;
}
.modal-bar .thumb{
    height: 629px;
    border: 1px solid #85858b;
    border-radius: 5px;
    background: #a9a9ae;
}
.modal-footer{
    display: flex;
    align-items: center;
    justify-content: flex-end;
    height: 65px;
    padding-right: 15px;
    background: #e9e9e9;
}
.continue{
    height: 34px;
    padding: 0 12px;
    border: 1px solid #1c4583;
    border-radius: 4px;
    background: #3884f8;
    color: #1c4583;
}
```
